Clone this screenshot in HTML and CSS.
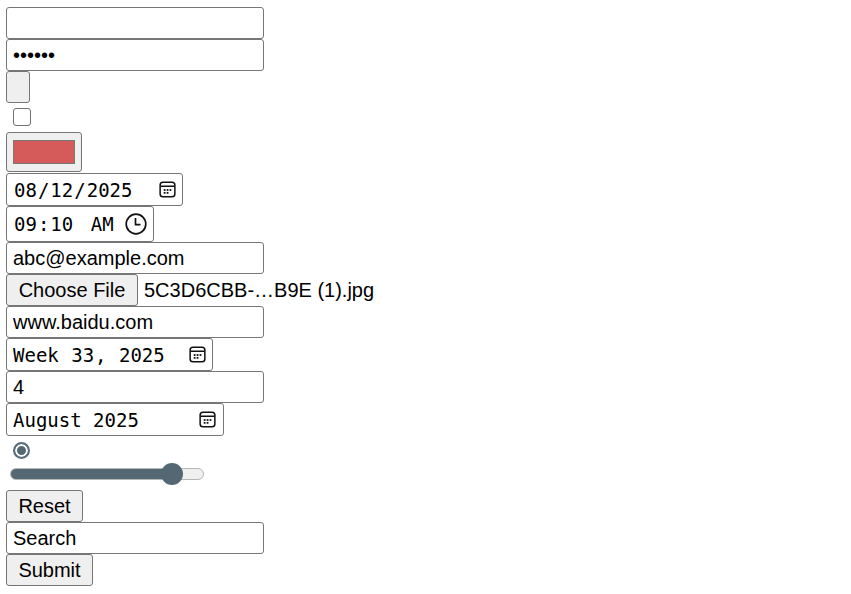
FILE: index.html
```html
<!DOCTYPE html>
<html lang="en">
<head>
    <meta charset="UTF-8">
    <meta name="viewport" content="width=device-width, initial-scale=1.0">
    <title>Input Types</title>
    <link rel="stylesheet" href="styles.css">
</head>
<body>
    <form class="form-list" onsubmit="return false">
        <input type="text" class="field wide">
        <input type="password" class="field wide" value="123456">
        <button type="button" class="btn blank"></button>
        <input type="checkbox" class="check">
        <input type="color" class="color" value="#d55a5a">
        <input type="date" class="field mono date" value="2025-08-12">
        <input type="time" class="field mono time" value="09:10">
        <input type="email" class="field wide" value="abc@example.com">
        <label class="file-row">
            <span class="btn file-btn">Choose File</span>
            <span class="file-name">5C3D6CBB-…B9E (1).jpg</span>
            <input type="file" class="file-input">
        </label>
        <input type="url" class="field wide" value="www.baidu.com">
        <input type="week" class="field mono week" value="2025-W33">
        <input type="number" class="field wide" value="4">
        <input type="text" class="field mono month" value="August 2025" readonly>
        <input type="radio" class="radio" checked>
        <input type="range" class="slider" min="0" max="100" value="88">
        <button type="reset" class="btn reset">Reset</button>
        <input type="search" class="field wide" value="Search">
        <button type="submit" class="btn submit">Submit</button>
    </form>
</body>
</html>
```

FILE: styles.css
```css
body {
    margin: 7px 6px;
    font-family: 'Liberation Sans', Arial, sans-serif;
    font-size: 20px;
    color: #000;
    background: #fff;
}

.form-list {
    display: flex;
    flex-direction: column;
    align-items: flex-start;
}

.field {
    box-sizing: border-box;
    height: 32px;
    margin: 0;
    padding: 0 6px;
    border: 1px solid #767676;
    border-radius: 3px;
    font-family: 'Liberation Sans', Arial, sans-serif;
    font-size: 20px;
    color: #000;
    background: #fff;
    outline: none;
}

.wide {
    width: 258px;
}

.mono {
    font-family: 'DejaVu Sans Mono', monospace;
    font-size: 19px;
    height: 33px;
}

.date {
    width: 177px;
}

.time {
    width: 148px;
    height: 36px;
}

.time::-webkit-datetime-edit-ampm-field {
    margin-left: 4px;
}

.week {
    width: 207px;
}

/* calendar icon, same as the picker ones */
.month {
    width: 218px;
    padding-right: 30px;
    background: #fff url("data:image/svg+xml,%3Csvg xmlns='http://www.w3.org/2000/svg' viewBox='0 0 18 18'%3E%3Crect x='1.2' y='1.2' width='15.6' height='15.6' rx='3' fill='none' stroke='%23111' stroke-width='1.6'/%3E%3Cpath d='M1.5 5.6h15' stroke='%23111' stroke-width='1.6'/%3E%3Cg fill='%23111'%3E%3Crect x='5' y='8.6' width='1.9' height='1.9'/%3E%3Crect x='8.1' y='8.6' width='1.9' height='1.9'/%3E%3Crect x='11.2' y='8.6' width='1.9' height='1.9'/%3E%3Crect x='5' y='11.6' width='1.9' height='1.9'/%3E%3Crect x='8.1' y='11.6' width='1.9' height='1.9'/%3E%3C/g%3E%3C/svg%3E") no-repeat right 7px center / 17px 17px;
}

.date::-webkit-calendar-picker-indicator,
.week::-webkit-calendar-picker-indicator {
    width: 17px;
    height: 17px;
    margin-left: 4px;
    padding: 0;
    background: url("data:image/svg+xml,%3Csvg xmlns='http://www.w3.org/2000/svg' viewBox='0 0 18 18'%3E%3Crect x='1.2' y='1.2' width='15.6' height='15.6' rx='3' fill='none' stroke='%23111' stroke-width='1.6'/%3E%3Cpath d='M1.5 5.6h15' stroke='%23111' stroke-width='1.6'/%3E%3Cg fill='%23111'%3E%3Crect x='5' y='8.6' width='1.9' height='1.9'/%3E%3Crect x='8.1' y='8.6' width='1.9' height='1.9'/%3E%3Crect x='11.2' y='8.6' width='1.9' height='1.9'/%3E%3Crect x='5' y='11.6' width='1.9' height='1.9'/%3E%3Crect x='8.1' y='11.6' width='1.9' height='1.9'/%3E%3C/g%3E%3C/svg%3E") no-repeat center / contain;
}

.time::-webkit-calendar-picker-indicator {
    width: 22px;
    height: 22px;
    margin-left: 4px;
    padding: 0;
    background: url("data:image/svg+xml,%3Csvg xmlns='http://www.w3.org/2000/svg' viewBox='0 0 22 22'%3E%3Ccircle cx='11' cy='11' r='9.8' fill='none' stroke='%23111' stroke-width='1.7'/%3E%3Cpath d='M10.5 5v6.6h5' fill='none' stroke='%23111' stroke-width='1.7'/%3E%3C/svg%3E") no-repeat center / contain;
}

.btn {
    box-sizing: border-box;
    height: 32px;
    margin: 0;
    padding: 0;
    border: 1px solid #767676;
    border-radius: 3px;
    background: #efefef;
    font-family: 'Liberation Sans', Arial, sans-serif;
    font-size: 20px;
    color: #000;
    line-height: 30px;
    text-align: center;
    white-space: nowrap;
}

.blank {
    width: 24px;
}

.reset {
    width: 77px;
}

.submit {
    width: 87px;
}

.check {
    -webkit-appearance: none;
    appearance: none;
    box-sizing: border-box;
    width: 18px;
    height: 18px;
    margin: 5px 0 6px 7px;
    border: 1px solid #707070;
    border-radius: 3px;
    background: #fff;
}

.color {
    box-sizing: border-box;
    width: 76px;
    height: 40px;
    margin: 0 0 1px 0;
    padding: 1px 3px;
    border: 1px solid #767676;
    border-radius: 3px;
    background: #efefef;
}

.color::-webkit-color-swatch-wrapper {
    padding: 6px 3px;
}

.color::-webkit-color-swatch {
    border: 1px solid #777;
    border-radius: 0;
}

.file-row {
    display: flex;
    align-items: center;
    height: 32px;
}

.file-btn {
    display: inline-block;
    width: 132px;
}

.file-name {
    margin-left: 6px;
}

.file-input {
    display: none;
}

.radio {
    -webkit-appearance: none;
    appearance: none;
    box-sizing: border-box;
    width: 17px;
    height: 17px;
    margin: 6px 0 4px 7px;
    border: 2px solid #5d6f7a;
    border-radius: 50%;
    background: #536873;
    box-shadow: inset 0 0 0 2px #fff;
}

.slider {
    -webkit-appearance: none;
    appearance: none;
    width: 194px;
    height: 22px;
    margin: 0 0 5px 4px;
    background: transparent;
}

.slider::-webkit-slider-runnable-track {
    height: 12px;
    border: 1px solid #b5b5b5;
    border-radius: 6px;
    background: linear-gradient(to right, #536873 84%, #efefef 84%);
}

.slider::-webkit-slider-thumb {
    -webkit-appearance: none;
    appearance: none;
    width: 22px;
    height: 22px;
    margin-top: -6px;
    border-radius: 50%;
    background: #536873;
}
```
